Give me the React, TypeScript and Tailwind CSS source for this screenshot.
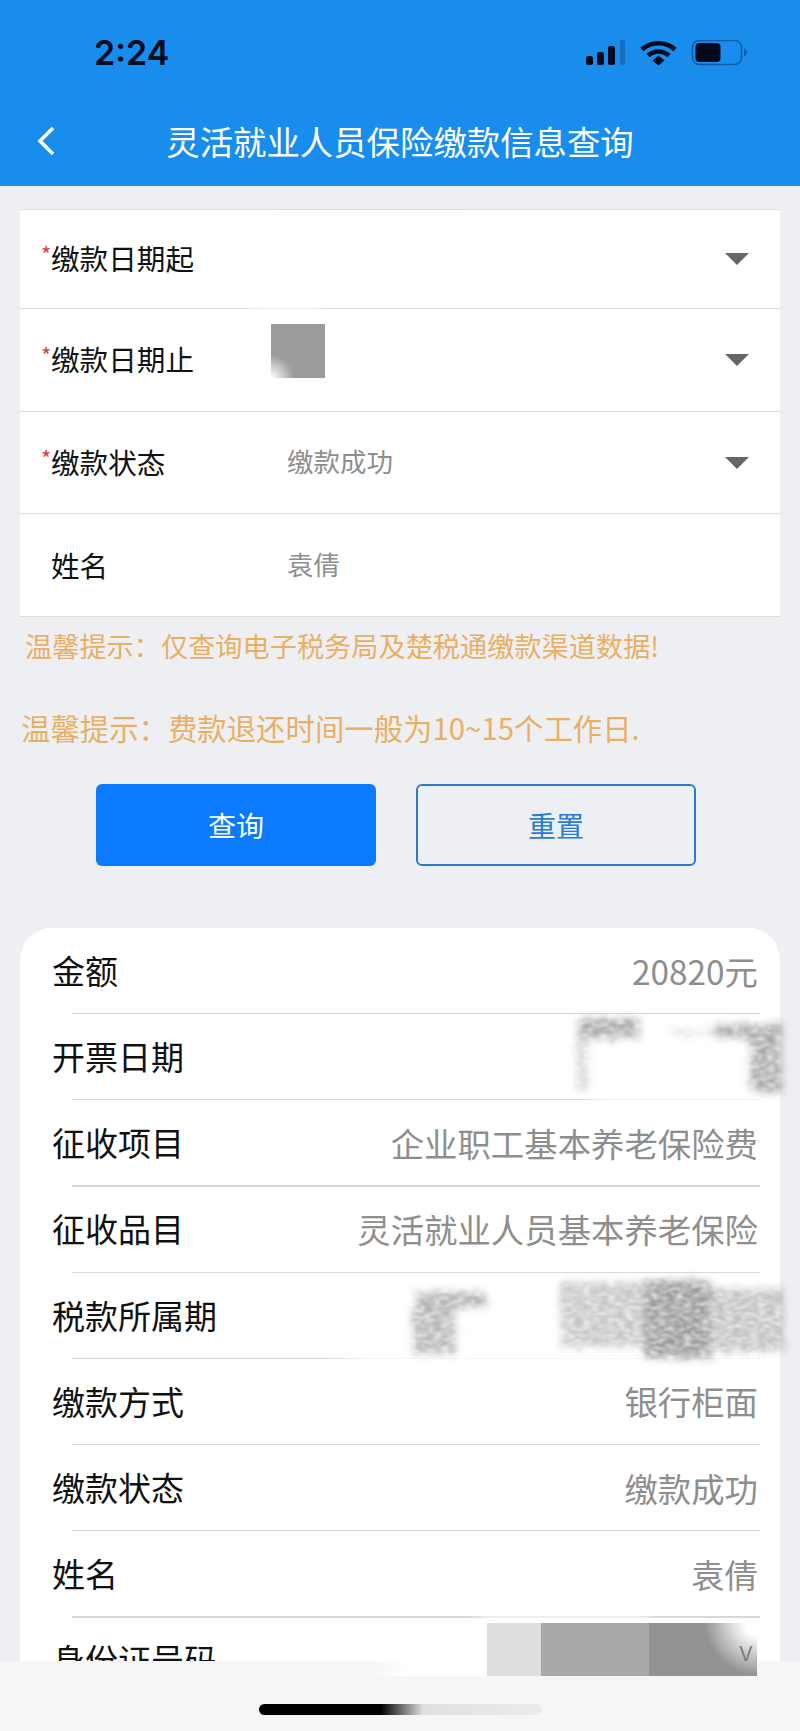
import { ReactNode } from 'react'

const font = '[font-family:"Noto_Sans_CJK_SC","Inter",sans-serif]'

const formRows = [
    { label: '缴款日期起', required: true, value: '', arrow: true },
    { label: '缴款日期止', required: true, value: '', arrow: true },
    { label: '缴款状态', required: true, value: '缴款成功', arrow: true },
    { label: '姓名', required: false, value: '袁倩', arrow: false },
]

const resultRows = [
    ['金额', '20820元'],
    ['开票日期', ''],
    ['征收项目', '企业职工基本养老保险费'],
    ['征收品目', '灵活就业人员基本养老保险'],
    ['税款所属期', ''],
    ['缴款方式', '银行柜面'],
    ['缴款状态', '缴款成功'],
    ['姓名', '袁倩'],
    ['身份证号码', ''],
]

function StatusIcons() {
    return (
        <svg width="166" height="30" viewBox="0 0 166 30" fill="none">
            <rect x="0" y="16" width="7" height="9" rx="2.5" fill="#020a1c" />
            <rect x="11" y="12" width="7" height="13" rx="2" fill="#020a1c" />
            <rect x="22" y="6" width="7" height="19" rx="2" fill="#020a1c" />
            <rect x="34" y="0" width="5" height="25" rx="2" fill="#1a6cc0" />
            <path d="M56 9.5C65 1 80 1 89 9.5" stroke="#020a1c" strokeWidth="4.5" />
            <path d="M62 15.5C68 10 77 10 83 15.5" stroke="#020a1c" strokeWidth="4.5" />
            <path d="M66.5 20.5L72.5 15.5L78.5 20.5L72.5 25.5Z" fill="#020a1c" />
            <rect x="106.5" y="0.5" width="49" height="24" rx="7" stroke="#0f5cab" strokeWidth="1.6" />
            <rect x="109.5" y="3" width="25" height="19" rx="4" fill="#020a1c" />
            <path d="M158 8.5C160 9.5 161 11 161 12.5C161 14 160 15.5 158 16.5Z" fill="#0f5cab" />
        </svg>
    )
}

function Arrow() {
    return (
        <svg width="24" height="12" viewBox="0 0 24 12" className="shrink-0">
            <path d="M0 0H24L12 12Z" fill="#666666" />
        </svg>
    )
}

function Smudges() {
    return (
        <svg width="800" height="1731" viewBox="0 0 800 1731" className="pointer-events-none absolute top-0 left-0">
            <defs>
                <filter id="pencil" x="-15%" y="-15%" width="130%" height="130%">
                    <feTurbulence type="fractalNoise" baseFrequency="0.12 0.32" numOctaves="4" seed="4" result="noise" />
                    <feColorMatrix in="noise" type="matrix" values="0 0 0 0 0  0 0 0 0 0  0 0 0 0 0  1.7 0 0 0 -0.1" result="grain" />
                    <feDisplacementMap in="SourceGraphic" in2="noise" scale="14" result="moved" />
                    <feGaussianBlur in="moved" stdDeviation="3.5" result="soft" />
                    <feComposite in="soft" in2="grain" operator="in" />
                    <feGaussianBlur stdDeviation="0.9" />
                </filter>
                <filter id="soft">
                    <feGaussianBlur stdDeviation="9" />
                </filter>
            </defs>

            {/* wiped parts of the separators */}
            <rect x="250" y="304" width="70" height="10" fill="#ffffff" filter="url(#soft)" />
            <rect x="590" y="1092" width="180" height="14" fill="#ffffff" filter="url(#soft)" />
            <rect x="350" y="1345" width="420" height="22" fill="#ffffff" filter="url(#soft)" />
            <rect x="480" y="1608" width="170" height="14" fill="#ffffff" filter="url(#soft)" />
            <rect x="280" y="213" width="180" height="3" fill="#dcdcdc" filter="url(#soft)" />

            {/* 开票日期 */}
            <g filter="url(#pencil)" fill="#a8a8a8">
                <rect x="578" y="1018" width="62" height="20" />
                <rect x="576" y="1038" width="12" height="52" opacity="0.5" />
                <rect x="670" y="1030" width="46" height="5" opacity="0.5" />
                <rect x="716" y="1024" width="68" height="14" />
                <rect x="750" y="1038" width="32" height="54" />
            </g>

            {/* 税款所属期 */}
            <g filter="url(#pencil)" fill="#989898">
                <rect x="416" y="1292" width="70" height="16" opacity="0.8" />
                <rect x="412" y="1308" width="44" height="46" opacity="0.7" />
                <rect x="560" y="1282" width="92" height="66" opacity="0.55" />
                <rect x="645" y="1280" width="66" height="78" />
                <rect x="712" y="1288" width="72" height="64" opacity="0.6" />
            </g>
        </svg>
    )
}

function Row({ first, children }: { first: boolean; children: ReactNode }) {
    return (
        <div className={`flex items-center border-b-[1.5px] border-[#dcdcdc] bg-white ${first ? 'h-[99px] pb-[1px]' : 'h-[102.7px]'}`}>
            {children}
        </div>
    )
}

export default function App() {
    return (
        <div lang="zh-CN" className={`relative h-[1731px] w-[800px] overflow-hidden bg-[#eeeff3] ${font}`}>
            <header className="h-[186px] bg-[#188dec]">
                <div className="flex h-[105px] items-start justify-between pt-[26px] pr-[48px] pl-[94px]">
                    <span className="text-[34px] leading-[54px] font-semibold text-[#020a1c] [font-family:Inter,sans-serif]">2:24</span>
                    <div className="pt-[14px]">
                        <StatusIcons />
                    </div>
                </div>
                <div className="relative flex h-[72px] items-center justify-center">
                    <svg width="20" height="30" viewBox="0 0 20 30" fill="none" className="absolute top-[21px] left-[36px]">
                        <path d="M17 2L4 15L17 28" stroke="#ffffff" strokeWidth="3.6" />
                    </svg>
                    <h1 className="text-[33.4px] leading-[40px] font-normal text-white">灵活就业人员保险缴款信息查询</h1>
                </div>
            </header>

            <section className="mx-[20px] mt-[23px] border-t-[1.5px] border-[#dcdcdc]">
                {formRows.map((row, i) => (
                    <Row key={i} first={i === 0}>
                        <div className="flex w-[267px] items-center pl-[21px] text-[28.6px] text-[#111111]">
                            <span className="w-[10px] self-start pt-[3px] text-[22px] leading-[26px] text-[#d9413f]">{row.required ? '*' : ''}</span>
                            <span>{row.label}</span>
                        </div>
                        <div className="flex-1 pb-[3px] text-[26.5px] text-[#8e8e8e]">{row.value}</div>
                        {row.arrow && (
                            <div className="pr-[31px]">
                                <Arrow />
                            </div>
                        )}
                    </Row>
                ))}
            </section>

            <p className="h-[56px] pl-[25px] text-[27.2px] leading-[56px] whitespace-nowrap text-[#e9b064]">
                温馨提示：仅查询电子税务局及楚税通缴款渠道数据!
            </p>
            <p className="mt-[34px] h-[40px] pl-[21px] text-[29.4px] leading-[40px] whitespace-nowrap text-[#e9b064]">
                温馨提示：费款退还时间一般为10~15个工作日.
            </p>

            <div className="mt-[37px] flex gap-[40px] pl-[96px]">
                <button type="button" className="h-[82px] w-[280px] rounded-[6px] bg-[#0a7aff] text-[28px] text-white">
                    查询
                </button>
                <button type="button" className="h-[82px] w-[280px] rounded-[6px] border-2 border-[#2a7bd3] text-[28px] text-[#2a7bd3]">
                    重置
                </button>
            </div>

            <section className="mx-[20px] mt-[62px] rounded-t-[32px] bg-white pb-[80px]">
                {resultRows.map(([label, value], i) => (
                    <div key={i}>
                        <div className="flex h-[85px] items-center justify-between pr-[22px] pl-[32px]">
                            <span className="text-[33px] whitespace-nowrap text-[#111111]">{label}</span>
                            <span className="text-[33.4px] whitespace-nowrap text-[#8e8e8e]">{value}</span>
                        </div>
                        <div className="mr-[20px] ml-[52px] h-[1.2px] bg-[#d8d8d8]" />
                    </div>
                ))}
            </section>

            <Smudges />

            {/* blurred block on the second date */}
            <div className="absolute top-[324px] left-[271px] h-[54px] w-[54px] bg-[radial-gradient(circle_at_0%_100%,#ffffff_0%,#9c9c9c_30%)]" />

            {/* home indicator bar */}
            <div className="absolute right-0 bottom-0 left-0 flex h-[70px] items-start justify-center bg-[#f6f6f6] pt-[43px]">
                <div className="h-[11px] w-[283px] rounded-full bg-[linear-gradient(90deg,#000000_0%,#000000_43%,#e0e0e0_58%,#ececec_100%)]" />
            </div>
            <div className="absolute top-[1661px] left-[372px] h-[15px] w-[115px] bg-[linear-gradient(90deg,#f6f6f6,#ffffff_30%)]" />

            {/* blurred id number */}
            <div className="absolute top-[1623px] left-[487px] flex h-[53px] w-[270px]">
                <div className="w-[54px] bg-[#dedede]" />
                <div className="w-[108px] bg-[#a9a9a9]" />
                <div className="flex-1 bg-[radial-gradient(circle_at_100%_0%,#ffffff_12px,#939393_52px)]" />
            </div>
            <div className="absolute top-[1642px] left-[739px] text-[20px] leading-[24px] text-[#7a7a7a] [font-family:Inter,sans-serif]">V</div>
        </div>
    )
}
